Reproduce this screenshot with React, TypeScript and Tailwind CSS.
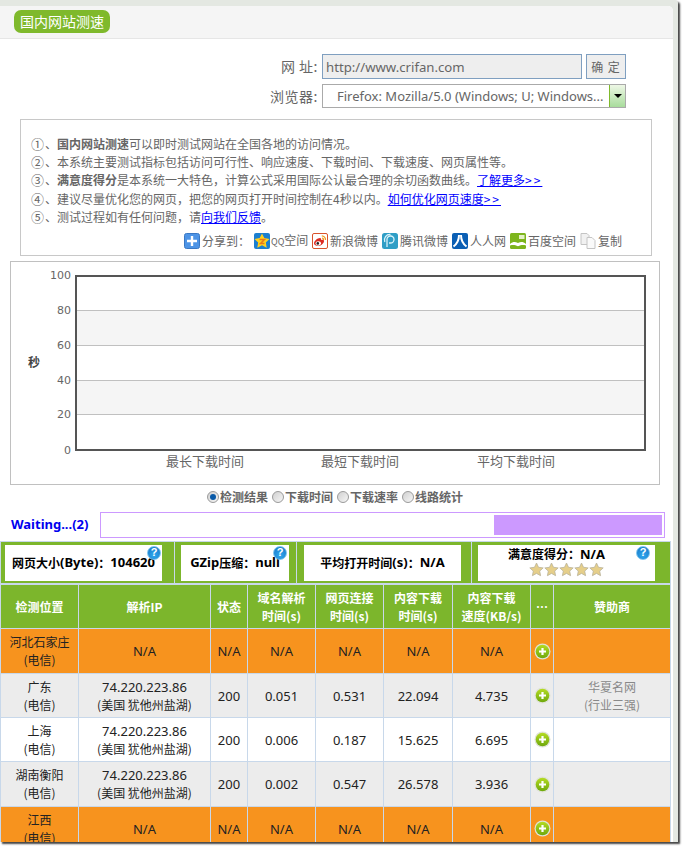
// ─── Data ────────────────────────────────────────────────────────────────────

const CJK = 'font-["Noto_Sans_CJK_SC","Noto_Sans",sans-serif]'

function More({ href, text }: { href: string; text: string }) {
  return (
    <a className="text-[#0000ff] underline" href={href}>
      {text}
      <span className="tracking-[2px]">&gt;&gt;</span>
    </a>
  )
}

const notes = [
  {
    mark: '①',
    body: (
      <>
        <b>国内网站测速</b>可以即时测试网站在全国各地的访问情况。
      </>
    ),
  },
  { mark: '②', body: <>本系统主要测试指标包括访问可行性、响应速度、下载时间、下载速度、网页属性等。</> },
  {
    mark: '③',
    body: (
      <>
        <b>满意度得分</b>是本系统一大特色，计算公式采用国际公认最合理的余切函数曲线。
        <More href="#more" text="了解更多" />
      </>
    ),
  },
  {
    mark: '④',
    body: (
      <>
        建议尽量优化您的网页，把您的网页打开时间控制在4秒以内。
        <More href="#speed" text="如何优化网页速度" />
      </>
    ),
  },
  {
    mark: '⑤',
    body: (
      <>
        测试过程如有任何问题，请<a className="text-[#0000ff] underline" href="#feedback">向我们反馈</a>。
      </>
    ),
  },
]

const radios = [
  { label: '检测结果', on: true },
  { label: '下载时间', on: false },
  { label: '下载速率', on: false },
  { label: '线路统计', on: false },
]

const columns = [
  { title: ['检测位置'], width: 'w-[78px]' },
  { title: ['解析IP'], width: 'w-[132px]' },
  { title: ['状态'], width: 'w-[37px]' },
  { title: ['域名解析', '时间(s)'], width: 'w-[68px]' },
  { title: ['网页连接', '时间(s)'], width: 'w-[68px]' },
  { title: ['内容下载', '时间(s)'], width: 'w-[69px]' },
  { title: ['内容下载', '速度(KB/s)'], width: 'w-[78px]' },
  { title: ['…'], width: 'w-[23px]' },
  { title: ['赞助商'], width: 'w-[117px]' },
]

const IP = ['74.220.223.86', '(美国 犹他州盐湖)']
const NA = ['N/A']

const rows = [
  { place: ['河北石家庄', '(电信)'], ip: NA, vals: ['N/A', 'N/A', 'N/A', 'N/A', 'N/A'], tone: 'bg-[#f7931e]', h: 'h-[45px]', sponsor: [] },
  { place: ['广东', '(电信)'], ip: IP, vals: ['200', '0.051', '0.531', '22.094', '4.735'], tone: 'bg-[#ececec]', h: 'h-[44px]', sponsor: ['华夏名网', '(行业三强)'] },
  { place: ['上海', '(电信)'], ip: IP, vals: ['200', '0.006', '0.187', '15.625', '6.695'], tone: 'bg-white', h: 'h-[44px]', sponsor: [] },
  { place: ['湖南衡阳', '(电信)'], ip: IP, vals: ['200', '0.002', '0.547', '26.578', '3.936'], tone: 'bg-[#ececec]', h: 'h-[45px]', sponsor: [] },
  { place: ['江西', '(电信)'], ip: NA, vals: ['N/A', 'N/A', 'N/A', 'N/A', 'N/A'], tone: 'bg-[#f7931e]', h: 'h-[44px]', sponsor: [] },
]

// ─── Icons ───────────────────────────────────────────────────────────────────

function PlusSquare() {
  return (
    <svg width="16" height="16" viewBox="0 0 16 16" className="shrink-0">
      <rect x="0.5" y="0.5" width="15" height="15" rx="2" fill="#4d94e6" stroke="#3a78c4" />
      <path d="M8 3v10M3 8h10" stroke="#fff" strokeWidth="2.4" />
    </svg>
  )
}

function QzoneIcon() {
  return (
    <svg width="16" height="16" viewBox="0 0 16 16" className="shrink-0">
      <rect width="16" height="16" rx="2" fill="#1b7fd0" />
      <path d="M8 .5l2.3 4.6 5.2.8-3.7 3.6.9 5.2L8 12.300l-4.700 2.400.9-5.200L.5 5.900l5.200-.8z" fill="#ffd21f" />
      <path d="M5.500 6.500h5L6.500 10.500h4" fill="none" stroke="#e8791a" strokeWidth="1.500" />
    </svg>
  )
}

function WeiboIcon() {
  return (
    <svg width="16" height="16" viewBox="0 0 16 16" className="shrink-0">
      <rect x="0.5" y="0.5" width="15" height="15" rx="1.500" fill="#fff" stroke="#d9532c" />
      <path d="M2 10.500c0-2.500 3.500-5.500 6-5.500 1.200 0 1.200 1.200 1 2 1.800-.6 3-.2 3 1 0 2.500-3 4.800-5.500 4.800S2 12.300 2 10.500z" fill="#dc2a22" />
      <ellipse cx="6.300" cy="10.300" rx="2.700" ry="2.100" fill="#fff" />
      <circle cx="5.800" cy="10.400" r="1.300" fill="#222" />
      <path d="M9.800 2.800a3.800 3.800 0 0 1 3.700 4.200M10 5a1.700 1.700 0 0 1 1.500 2" fill="none" stroke="#f09a1c" strokeWidth="1.200" />
    </svg>
  )
}

function TencentIcon() {
  return (
    <svg width="16" height="16" viewBox="0 0 16 16" className="shrink-0">
      <rect width="16" height="16" rx="2.500" fill="#2f9ec6" />
      <path d="M5 14V6.500a3.500 3.500 0 1 1 3.500 3.500H7M2.800 9A5.500 5.500 0 0 1 8.500 1.500" fill="none" stroke="#d8f2fa" strokeWidth="1.300" />
    </svg>
  )
}

function RenrenIcon() {
  return (
    <svg width="16" height="16" viewBox="0 0 16 16" className="shrink-0">
      <rect width="16" height="16" rx="2" fill="#0b5fb4" />
      <path d="M7 2c0 5-1.500 8.500-5.500 11.500M9 2c0 5 1.500 8.500 5.500 11.500" fill="none" stroke="#fff" strokeWidth="2" />
    </svg>
  )
}

function BaiduIcon() {
  return (
    <svg width="16" height="16" viewBox="0 0 16 16" className="shrink-0">
      <rect width="16" height="16" rx="1.500" fill="#7db51c" />
      <rect x="9" y="2" width="5.500" height="4" fill="#e4f0c8" />
      <path d="M0 11c3-2.500 5-2.500 8-1 3-1.500 5-1.500 8 1v1.500c-3-.8-5-.5-8 .8-3-1.300-5-1.600-8-.8z" fill="#fff" />
    </svg>
  )
}

function CopyIcon() {
  return (
    <svg width="16" height="16" viewBox="0 0 16 16" className="shrink-0">
      <path d="M1 .5h6l2 2v9H1z" fill="#f1f1f1" stroke="#c4c4c4" />
      <path d="M7 4.500h5l3 3v8H7z" fill="#fafafa" stroke="#c4c4c4" />
    </svg>
  )
}

function Star() {
  return (
    <svg width="15" height="15" viewBox="0 0 15 15">
      <path d="M7.500 1l2 4.300 4.700.6-3.500 3.200.9 4.600-4.100-2.300-4.100 2.300.9-4.600L.8 5.900l4.700-.6z" fill="#e6cf8a" stroke="#b9b29a" strokeWidth="0.800" />
    </svg>
  )
}

function PlusCircle() {
  return (
    <svg width="17" height="17" viewBox="0 0 17 17" className="mx-auto block">
      <defs>
        <linearGradient id="plusFill" x1="0" y1="0" x2="0" y2="1">
          <stop offset="0" stopColor="#b5dc24" />
          <stop offset="1" stopColor="#6ea80c" />
        </linearGradient>
      </defs>
      <circle cx="8.500" cy="8.500" r="8" fill="#dfe3d6" />
      <circle cx="8.500" cy="8.500" r="6.800" fill="url(#plusFill)" />
      <path d="M8.500 5v7M5 8.500h7" stroke="#fff" strokeWidth="2.200" />
    </svg>
  )
}

function Help({ className }: { className: string }) {
  return (
    <span className={`absolute ${className} flex h-[14px] w-[14px] items-center justify-center rounded-full border border-[#7cc4ee] bg-[radial-gradient(circle_at_50%_70%,#2fa8ee,#1673c4)] font-["Liberation_Sans",sans-serif] text-[11px] font-bold leading-none text-white`}>
      ?
    </span>
  )
}

function Latin({ children }: { children: string }) {
  return <span className="font-['Noto_Sans',sans-serif] text-[13px]">{children}</span>
}

// ─── Chart ───────────────────────────────────────────────────────────────────

function Chart() {
  const ticks = [
    { v: '100', y: 275 },
    { v: '80', y: 310 },
    { v: '60', y: 345 },
    { v: '40', y: 380 },
    { v: '20', y: 414 },
    { v: '0', y: 450 },
  ]
  const cats = [
    { t: '最长下载时间', x: 205 },
    { t: '最短下载时间', x: 360 },
    { t: '平均下载时间', x: 516 },
  ]
  return (
    <svg width="648" height="222" viewBox="11 262 648 222" className="block" fontFamily="'Noto Sans CJK SC', sans-serif">
      <rect x="76" y="310" width="569" height="35" fill="#f5f5f5" />
      <rect x="76" y="380" width="569" height="35" fill="#f5f5f5" />
      {[310.5, 345.5, 380.5, 414.5].map((y) => (
        <line key={y} x1="76" x2="645" y1={y} y2={y} stroke="#c0c0c0" />
      ))}
      <rect x="76" y="276" width="569" height="174" fill="none" stroke="#555" strokeWidth="2" />
      {ticks.map((t) => (
        <text key={t.v} x="71" y={t.y + 4} textAnchor="end" fontSize="11" fontFamily="'DejaVu Sans', sans-serif" fill="#666">
          {t.v}
        </text>
      ))}
      {cats.map((c) => (
        <text key={c.t} x={c.x} y="466" textAnchor="middle" fontSize="13" fill="#666">
          {c.t}
        </text>
      ))}
      <text x="34" y="367" textAnchor="middle" fontSize="12" fontWeight="700" fill="#444">
        秒
      </text>
    </svg>
  )
}

// ─── Page ────────────────────────────────────────────────────────────────────

export default function App() {
  return (
    <div className={`h-[846px] w-[682px] overflow-hidden bg-white ${CJK}`}>
      <div className="h-[842px] w-[678px] overflow-hidden rounded-tr-[3px] bg-[#e4e8e2] pt-[6px] pr-[5px] shadow-[2px_2px_2px_#444]">
        <div className="h-[836px] w-[673px] overflow-hidden rounded-tr-[5px] bg-white">
          {/* Title */}
          <div className="flex h-[33px] items-start border-b border-[#e6e6e6] bg-[#f5f5f5] pt-[4px] pl-[14px]">
            <h1 className="flex h-[23px] w-[96px] items-center justify-center rounded-[7px] bg-[#7fb92c] text-[14px] font-normal text-white">
              国内网站测速
            </h1>
          </div>

          {/* URL form */}
          <div className="mt-[15px] flex h-[25px] items-center text-[14px] text-[#666]">
            <span className="w-[318px] text-right tracking-[0.5px]">网 址:</span>
            <div className="ml-[4px] flex h-[25px] w-[260px] items-center border border-[#7f9fc0] bg-[#eeeeee] pt-[3px] pl-[3px] font-['Noto_Sans',sans-serif] text-[13.200px]">
              http://www.crifan.com
            </div>
            <button className="ml-[4px] h-[25px] w-[40px] border border-[#7f9fc0] bg-[#eeeeee] text-[12px] tracking-[1px] text-[#666]">确 定</button>
          </div>
          <div className="mt-[5px] flex h-[24px] items-center text-[14px] text-[#666]">
            <span className="w-[318px] text-right tracking-[0.5px]">浏览器:</span>
            <div className="ml-[4px] flex h-[24px] w-[304px] items-stretch border border-[#aaaaaa]">
              <span className="flex-1 overflow-hidden pl-[14px] font-['Noto_Sans',sans-serif] text-[13px] leading-[22px] whitespace-nowrap">
                Firefox: Mozilla/5.0 (Windows; U; Windows...
              </span>
              <span className="flex w-[16px] shrink-0 items-center justify-center border-l border-[#7fb92c] bg-[linear-gradient(#eef7e6,#a8dc9c)]">
                <span className="h-0 w-0 border-x-[4px] border-t-[4px] border-x-transparent border-t-black" />
              </span>
            </div>
          </div>

          {/* Notes */}
          <div className="mt-[11px] ml-[20px] h-[137px] w-[632px] border border-[#c8c8c8] pt-[15px] pl-[10px] text-[12px] text-[#666]">
            {notes.map((n) => (
              <p key={n.mark} className="h-[18.200px] whitespace-nowrap leading-[18px]">
                <span className="inline-block w-[14px] text-[13px]">{n.mark}</span>
                <span className="inline-block w-[12px]">、</span>
                {n.body}
              </p>
            ))}
            <div className="mt-[7px] ml-[153px] flex h-[16px] items-center whitespace-nowrap text-[12px] leading-[16px]">
              <PlusSquare />
              <span className="ml-[2px] w-[52px]">分享到：</span>
              <QzoneIcon />
              <span className="ml-[1px] w-[41px]">
                <span className="text-[9px]">QQ</span>空间
              </span>
              <WeiboIcon />
              <span className="ml-[2px] w-[52px]">新浪微博</span>
              <TencentIcon />
              <span className="ml-[2px] w-[52px]">腾讯微博</span>
              <RenrenIcon />
              <span className="ml-[2px] w-[40px]">人人网</span>
              <BaiduIcon />
              <span className="ml-[2px] w-[52px]">百度空间</span>
              <CopyIcon />
              <span className="ml-[2px]">复制</span>
            </div>
          </div>

          {/* Chart */}
          <div className="mt-[5px] ml-[10px] h-[224px] w-[650px] border border-[#c0c0c0]">
            <Chart />
          </div>

          {/* Radios */}
          <div className="mt-[4px] ml-[207px] flex h-[16px] items-center gap-[4px] text-[12px] font-bold text-[#666]">
            {radios.map((r) => (
              <label key={r.label} className="flex items-center gap-[1px]">
                <span className="flex h-[12px] w-[12px] items-center justify-center rounded-full border border-[#9a9a9a] bg-[linear-gradient(135deg,#d0d0d0,#f6f6f6)]">
                  {r.on && <span className="h-[6px] w-[6px] rounded-full bg-[#0a5aa8]" />}
                </span>
                {r.label}
              </label>
            ))}
          </div>

          {/* Progress */}
          <div className="mt-[7px] flex h-[26px] items-center">
            <span className="w-[100px] pl-[11px] font-['Noto_Sans',sans-serif] text-[13px] font-bold text-[#0000ee]">Waiting...(2)</span>
            <div className="flex h-[26px] w-[565px] items-center justify-end border border-[#cc99ff] pr-[2px]">
              <div className="h-[20px] w-[168px] bg-[#cc99ff]" />
            </div>
          </div>

          {/* Summary */}
          <div className="mt-[3px] flex h-[43px] w-[671px] border border-[#c8d8ea] bg-[#7cb62c] text-[12px] font-bold text-black">
            <div className="flex w-[174px] items-center border-r border-[#c8d8ea] pl-[4px]">
              <div className="relative flex h-[36px] w-[157px] items-center justify-center whitespace-nowrap bg-white">
                网页大小<Latin>(Byte)</Latin>：<Latin>104620</Latin>
                <Help className="top-[1px] left-[142px]" />
              </div>
            </div>
            <div className="flex w-[122px] items-center border-r border-[#c8d8ea] pl-[6px]">
              <div className="relative flex h-[36px] w-[108px] items-center justify-center whitespace-nowrap bg-white">
                <Latin>GZip</Latin>压缩：<Latin>null</Latin>
                <Help className="top-[1px] left-[92px]" />
              </div>
            </div>
            <div className="flex w-[175px] items-center border-r border-[#c8d8ea] pl-[7px]">
              <div className="flex h-[36px] w-[157px] items-center justify-center whitespace-nowrap bg-white">
                平均打开时间<Latin>(s)</Latin>：<Latin>N/A</Latin>
              </div>
            </div>
            <div className="flex flex-1 items-center pl-[6px]">
              <div className="relative flex h-[36px] w-[177px] flex-col items-center bg-white leading-[18px]">
                <span className="pr-[20px]">
                  满意度得分：<Latin>N/A</Latin>
                </span>
                <div className="-mt-[1px] flex">
                  {[0, 1, 2, 3, 4].map((i) => (
                    <Star key={i} />
                  ))}
                </div>
                <Help className="top-[1px] left-[158px]" />
              </div>
            </div>
          </div>

          {/* Results */}
          <table className="w-[671px] table-fixed border-collapse text-center text-[12px] leading-[18px] text-[#222]">
            <colgroup>
              {columns.map((c, i) => (
                <col key={i} className={c.width} />
              ))}
            </colgroup>
            <thead>
              <tr className="h-[44px] bg-[#7cb62c] font-bold text-white">
                {columns.map((c, i) => (
                  <th key={i} className="border border-[#c8d8ea] p-0">
                    {c.title.map((t) => (
                      <div key={t}>{t}</div>
                    ))}
                  </th>
                ))}
              </tr>
            </thead>
            <tbody>
              {rows.map((r) => (
                <tr key={r.place[0]} className={`${r.tone} ${r.h}`}>
                  <td className="border border-[#c8d8ea] p-0">
                    {r.place.map((t) => (
                      <div key={t}>{t}</div>
                    ))}
                  </td>
                  <td className="border border-[#c8d8ea] p-0">
                    {r.ip.map((t) => (
                      <div key={t} className={t === IP[0] || t === 'N/A' ? "font-['Noto_Sans',sans-serif] text-[13px]" : ''}>
                        {t}
                      </div>
                    ))}
                  </td>
                  {r.vals.map((v, i) => (
                    <td key={i} className="border border-[#c8d8ea] p-0 font-['Noto_Sans',sans-serif] text-[13px]">
                      {v}
                    </td>
                  ))}
                  <td className="border border-[#c8d8ea] p-0">
                    <PlusCircle />
                  </td>
                  <td className="border border-[#c8d8ea] p-0 text-[#888]">
                    {r.sponsor.map((t) => (
                      <div key={t}>{t}</div>
                    ))}
                  </td>
                </tr>
              ))}
            </tbody>
          </table>
        </div>
      </div>
    </div>
  )
}
